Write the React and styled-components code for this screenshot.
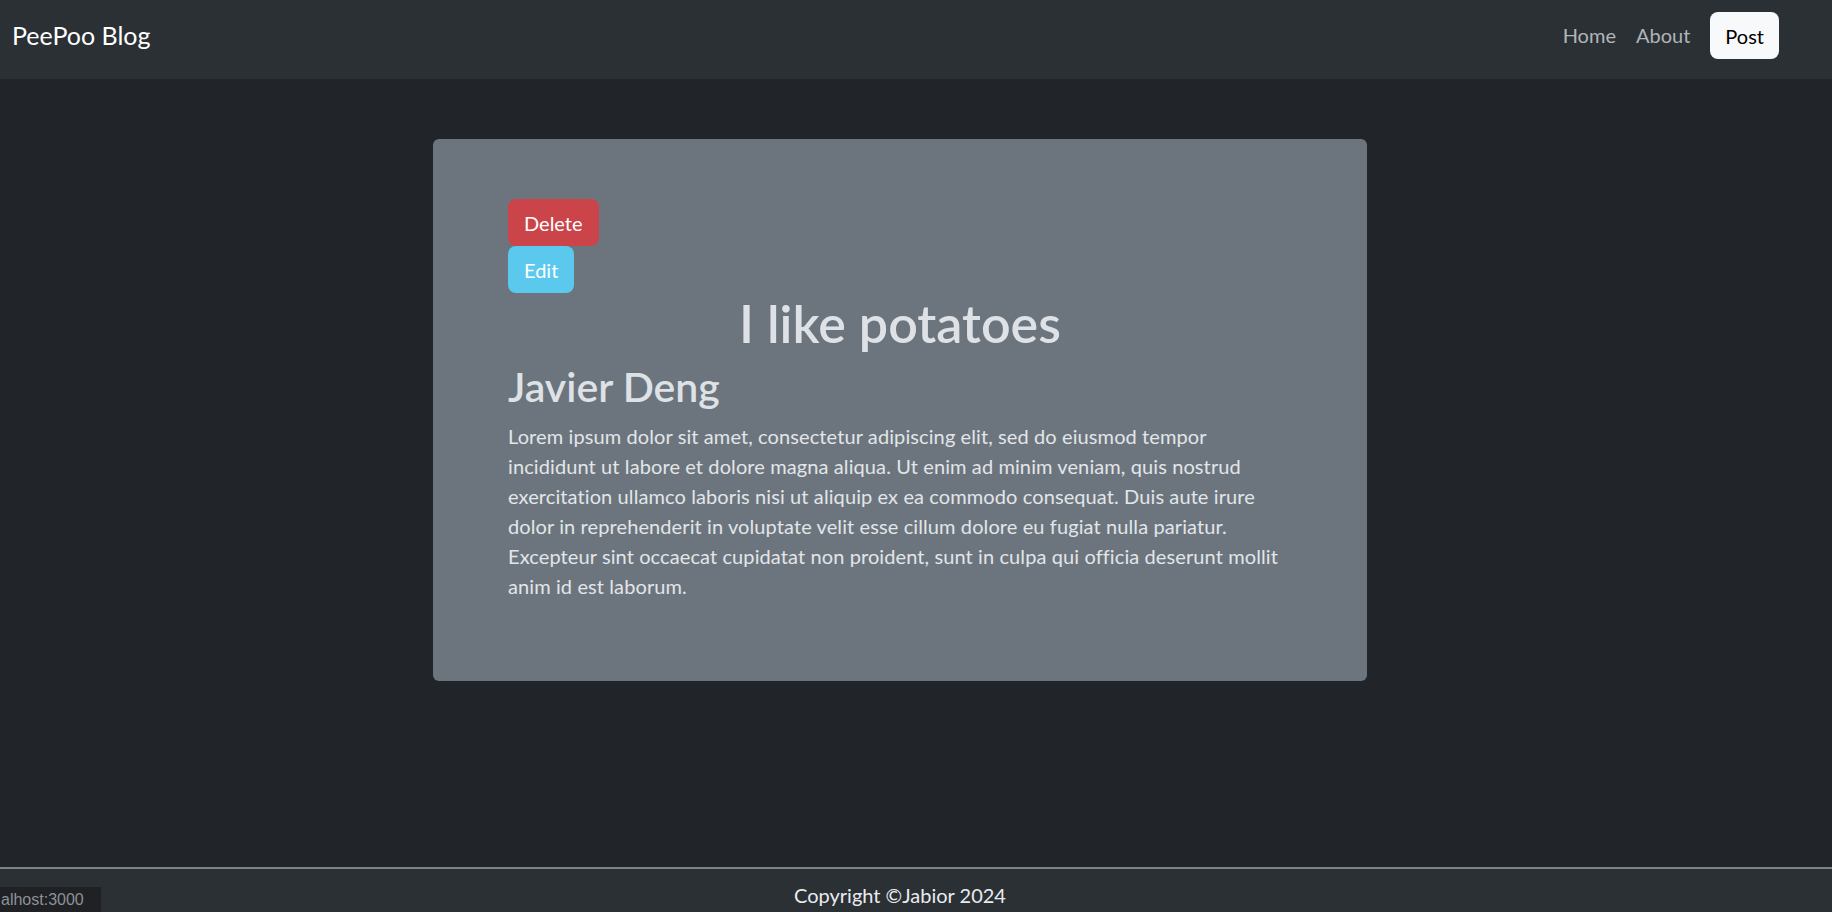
import styled, { createGlobalStyle } from 'styled-components';

const GlobalStyle = createGlobalStyle`
  html, body {
    margin: 0;
    padding: 0;
    background-color: #212529;
    font-family: Lato, "Noto Sans", sans-serif;
    color: #dee2e6;
  }

  * {
    box-sizing: border-box;
  }
`;

const Page = styled.div`
  min-height: 100vh;
  display: flex;
  flex-direction: column;
  position: relative;
`;

const Navbar = styled.nav`
  height: 79px;
  background-color: #2b3035;
  display: flex;
  align-items: flex-start;
  justify-content: space-between;
  padding: 12px 53px 0 12px;
`;

const Brand = styled.a`
  font-size: 25px;
  line-height: 47px;
  color: #fff;
  text-decoration: none;
`;

const NavLinks = styled.ul`
  list-style: none;
  display: flex;
  align-items: flex-start;
  gap: 20px;
  margin: 0;
  padding: 0;
`;

const NavLink = styled.a`
  display: block;
  font-size: 20px;
  line-height: 47px;
  color: rgba(222, 226, 230, 0.75);
  text-decoration: none;
`;

const PostButton = styled.button`
  height: 47px;
  font-family: inherit;
  font-size: 20px;
  line-height: 30px;
  padding: 0 15px;
  border: none;
  border-radius: 8px;
  background-color: #f8f9fa;
  color: #000;
`;

const Main = styled.main`
  flex: 1;
  display: flex;
  justify-content: center;
  align-items: flex-start;
  padding: 60px 32px 0 0;
`;

const Card = styled.article`
  width: 934px;
  height: 542px;
  background-color: #6c757d;
  border-radius: 6px;
  padding: 60px 75px;
`;

const ActionButton = styled.button`
  display: block;
  height: 47px;
  font-family: inherit;
  font-size: 20px;
  line-height: 30px;
  padding: 0 16px;
  border: none;
  border-radius: 8px;
  color: #fff;
  background-color: ${props => (props.$variant === 'danger' ? '#cb444a' : '#5bc9ed')};
`;

const Title = styled.h1`
  margin: 0 0 10px;
  text-align: center;
  font-size: 52px;
  line-height: 60px;
  font-weight: 600;
  color: #dee2e6;
`;

const Author = styled.h2`
  margin: 0 0 10px;
  font-size: 41px;
  line-height: 48px;
  font-weight: 600;
  color: #dee2e6;
`;

const Body = styled.p`
  margin: 0;
  font-size: 20px;
  line-height: 30px;
  letter-spacing: 0.1px;
  white-space: nowrap;
  color: #e2e5e9;
`;

const Footer = styled.footer`
  height: 45px;
  overflow: hidden;
  background-color: #2b3035;
  border-top: 2px solid #7d8185;
  padding: 11px 32px 0 0;
  text-align: center;
  font-size: 20px;
  line-height: 30px;
  color: #e9ecef;
`;

const StatusBubble = styled.div`
  position: absolute;
  left: 0;
  bottom: 0;
  width: 101px;
  height: 25px;
  padding-left: 1px;
  background-color: #202124;
  color: #8e9297;
  font-family: "Liberation Sans", Arial, sans-serif;
  font-size: 16px;
  line-height: 25px;
  white-space: nowrap;
`;

const lorem = [
  'Lorem ipsum dolor sit amet, consectetur adipiscing elit, sed do eiusmod tempor',
  'incididunt ut labore et dolore magna aliqua. Ut enim ad minim veniam, quis nostrud',
  'exercitation ullamco laboris nisi ut aliquip ex ea commodo consequat. Duis aute irure',
  'dolor in reprehenderit in voluptate velit esse cillum dolore eu fugiat nulla pariatur.',
  'Excepteur sint occaecat cupidatat non proident, sunt in culpa qui officia deserunt mollit',
  'anim id est laborum.',
];

const App = () => {
  return (
    <Page>
      <GlobalStyle />
      <Navbar>
        <Brand href="#">PeePoo Blog</Brand>
        <NavLinks>
          <li><NavLink href="#">Home</NavLink></li>
          <li><NavLink href="#">About</NavLink></li>
          <li><PostButton>Post</PostButton></li>
        </NavLinks>
      </Navbar>

      <Main>
        <Card>
          <ActionButton $variant="danger">Delete</ActionButton>
          <ActionButton $variant="info">Edit</ActionButton>
          <Title>I like potatoes</Title>
          <Author>Javier Deng</Author>
          <Body>
            {lorem.map((line, i) => (
              <span key={i}>
                {line}
                {i < lorem.length - 1 && <br />}
              </span>
            ))}
          </Body>
        </Card>
      </Main>

      <Footer>Copyright ©Jabior 2024</Footer>
      <StatusBubble>alhost:3000</StatusBubble>
    </Page>
  );
};

export default App;
